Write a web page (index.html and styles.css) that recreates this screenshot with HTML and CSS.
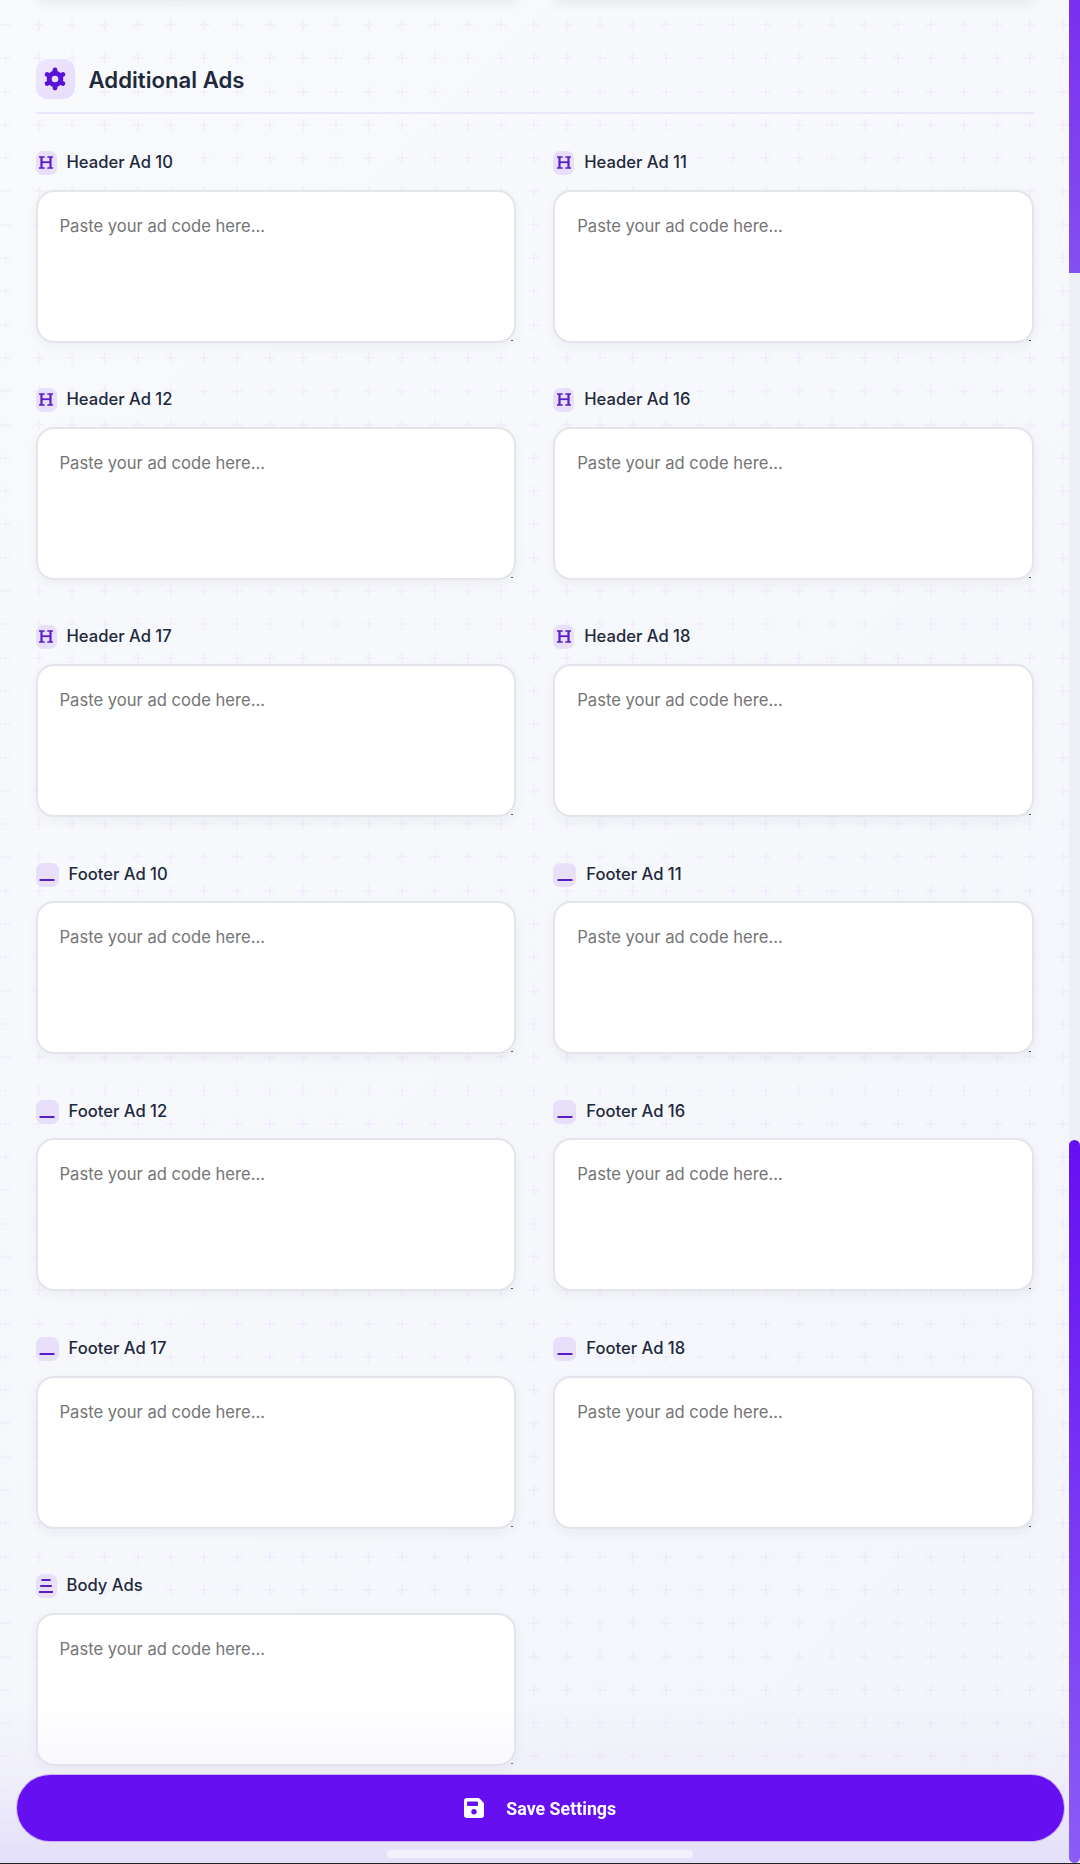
FILE: index.html
```html
<!DOCTYPE html>
<html lang="en">
<head>
  <meta charset="UTF-8">
  <meta name="viewport" content="width=device-width, initial-scale=1.0">
  <title>Additional Ads</title>
  <link rel="stylesheet" href="styles.css">
</head>
<body>
  <svg class="sprites" aria-hidden="true">
    <symbol id="icon-heading" viewBox="0 0 14 13">
      <path d="M0 1h5M9 1h5M0 12h5M9 12h5" stroke="currentColor" stroke-width="1.7" stroke-linecap="round" fill="none"/>
      <path d="M2.5 1v11M11.5 1v11" stroke="currentColor" stroke-width="2.2" fill="none"/>
      <path d="M2.5 6.2h9" stroke="currentColor" stroke-width="1.8" fill="none"/>
    </symbol>
    <symbol id="icon-footer" viewBox="0 0 16 4">
      <rect x="0.5" y="1" width="15" height="2" rx="0.6" fill="currentColor"/>
    </symbol>
    <symbol id="icon-body" viewBox="0 0 14 14">
      <path d="M2.4 1h9.2M1.2 7h11.600M0 13h14" stroke="currentColor" stroke-width="2" fill="none"/>
    </symbol>
  </svg>

  <div class="page">
    <div class="cut-row">
      <div class="cut-card"></div>
      <div class="cut-card"></div>
    </div>

    <div class="section-head">
      <span class="section-icon">
        <svg width="22" height="24" viewBox="0 0 22 24" fill="none" stroke="currentColor">
          <circle cx="11" cy="12" r="5.8" stroke-width="5"/>
          <path d="M11 3v1.500M11 19.500V21M3.200 7.500l1.300.750M17.500 15.750l1.300.750M3.200 16.500l1.300-.750M17.500 8.250l1.300-.750" stroke-width="4.800" stroke-linecap="round"/>
        </svg>
      </span>
      <h2 class="section-title">Additional Ads</h2>
    </div>

    <div class="ad-grid">
      <div class="ad-field">
        <label class="ad-label"><span class="label-icon"><svg class="ic-h"><use href="#icon-heading"/></svg></span>Header Ad 10</label>
        <textarea class="ad-input" placeholder="Paste your ad code here..."></textarea>
      </div>
      <div class="ad-field">
        <label class="ad-label"><span class="label-icon"><svg class="ic-h"><use href="#icon-heading"/></svg></span>Header Ad 11</label>
        <textarea class="ad-input" placeholder="Paste your ad code here..."></textarea>
      </div>
      <div class="ad-field">
        <label class="ad-label"><span class="label-icon"><svg class="ic-h"><use href="#icon-heading"/></svg></span>Header Ad 12</label>
        <textarea class="ad-input" placeholder="Paste your ad code here..."></textarea>
      </div>
      <div class="ad-field">
        <label class="ad-label"><span class="label-icon"><svg class="ic-h"><use href="#icon-heading"/></svg></span>Header Ad 16</label>
        <textarea class="ad-input" placeholder="Paste your ad code here..."></textarea>
      </div>
      <div class="ad-field">
        <label class="ad-label"><span class="label-icon"><svg class="ic-h"><use href="#icon-heading"/></svg></span>Header Ad 17</label>
        <textarea class="ad-input" placeholder="Paste your ad code here..."></textarea>
      </div>
      <div class="ad-field">
        <label class="ad-label"><span class="label-icon"><svg class="ic-h"><use href="#icon-heading"/></svg></span>Header Ad 18</label>
        <textarea class="ad-input" placeholder="Paste your ad code here..."></textarea>
      </div>
      <div class="ad-field">
        <label class="ad-label"><span class="label-icon wide"><svg class="ic-f"><use href="#icon-footer"/></svg></span>Footer Ad 10</label>
        <textarea class="ad-input" placeholder="Paste your ad code here..."></textarea>
      </div>
      <div class="ad-field">
        <label class="ad-label"><span class="label-icon wide"><svg class="ic-f"><use href="#icon-footer"/></svg></span>Footer Ad 11</label>
        <textarea class="ad-input" placeholder="Paste your ad code here..."></textarea>
      </div>
      <div class="ad-field">
        <label class="ad-label"><span class="label-icon wide"><svg class="ic-f"><use href="#icon-footer"/></svg></span>Footer Ad 12</label>
        <textarea class="ad-input" placeholder="Paste your ad code here..."></textarea>
      </div>
      <div class="ad-field">
        <label class="ad-label"><span class="label-icon wide"><svg class="ic-f"><use href="#icon-footer"/></svg></span>Footer Ad 16</label>
        <textarea class="ad-input" placeholder="Paste your ad code here..."></textarea>
      </div>
      <div class="ad-field">
        <label class="ad-label"><span class="label-icon wide"><svg class="ic-f"><use href="#icon-footer"/></svg></span>Footer Ad 17</label>
        <textarea class="ad-input" placeholder="Paste your ad code here..."></textarea>
      </div>
      <div class="ad-field">
        <label class="ad-label"><span class="label-icon wide"><svg class="ic-f"><use href="#icon-footer"/></svg></span>Footer Ad 18</label>
        <textarea class="ad-input" placeholder="Paste your ad code here..."></textarea>
      </div>
      <div class="ad-field">
        <label class="ad-label"><span class="label-icon"><svg class="ic-b"><use href="#icon-body"/></svg></span>Body Ads</label>
        <textarea class="ad-input" placeholder="Paste your ad code here..."></textarea>
      </div>
    </div>
  </div>

  <div class="bottom-fade"></div>
  <button class="save-button" type="button">
    <svg width="20" height="20" viewBox="0 0 20 20">
      <path fill-rule="evenodd" fill="currentColor" d="M3 0h11.200a2 2 0 0 1 1.400.6l3.800 3.800a2 2 0 0 1 .6 1.400V17a3 3 0 0 1-3 3H3a3 3 0 0 1-3-3V3a3 3 0 0 1 3-3zM4 3.500a1 1 0 0 0-1 1v2.500a1 1 0 0 0 1 1h9a1 1 0 0 0 1-1V4.500a1 1 0 0 0-1-1zM10 11a2.700 2.700 0 1 0 0 5.400a2.700 2.700 0 0 0 0-5.400z"/>
    </svg>
    <span>Save Settings</span>
  </button>
  <div class="home-bar"></div>

  <div class="scroll-track">
    <div class="thumb-top"></div>
    <div class="thumb-bottom"></div>
  </div>
  <div class="screen-edge"></div>
</body>
</html>
```

FILE: styles.css
```css
html, body {
  margin: 0;
  padding: 0;
  height: 1864px;
  overflow: hidden;
}
body {
  font-family: "Inter", "Liberation Sans", sans-serif;
  color: #1e293b;
  background-color: #f5f7fc;
  background-image:
    url("data:image/svg+xml,%3Csvg xmlns='http://www.w3.org/2000/svg' width='33' height='33'%3E%3Cpath d='M11 16.500h11M16.500 11v11' stroke='%236610f2' stroke-opacity='.045' stroke-width='1.500'/%3E%3C/svg%3E"),
    linear-gradient(135deg, #f8fafc 0%, #f3f5fb 100%);
  background-size: 33.06px 33.3px, 100% 100%;
  background-position: -11px 8.350px, 0 0;
}
.sprites {
  position: absolute;
  width: 0;
  height: 0;
}
.page {
  padding: 0 46px 0 35.500px;
}
.cut-row {
  display: grid;
  grid-template-columns: 1fr 1fr;
  gap: 37px;
  margin-top: -20px;
}
.cut-card {
  height: 20px;
  background: #fff;
  box-shadow: 0 4px 12px rgba(30, 41, 59, 0.07);
}
.section-head {
  display: flex;
  align-items: center;
  gap: 14px;
  margin-top: 59px;
  padding-bottom: 13px;
  border-bottom: 2px solid #e9e5fa;
}
.section-icon {
  width: 39px;
  height: 40px;
  border-radius: 12px;
  background: linear-gradient(135deg, #eee7fd, #e6ddfb);
  color: #5a12d8;
  display: flex;
  align-items: center;
  justify-content: center;
}
.section-title {
  margin: 0;
  font-size: 22.200px;
  font-weight: 600;
  color: #1e293b;
}
.ad-grid {
  display: grid;
  grid-template-columns: 1fr 1fr;
  column-gap: 37px;
  row-gap: 45.600px;
  margin-top: 37px;
}
.ad-field {
  display: flex;
  flex-direction: column;
  min-width: 0;
}
.ad-label {
  display: flex;
  align-items: flex-start;
  gap: 10px;
  height: 24px;
  margin-bottom: 14.600px;
  font-size: 16.600px;
  line-height: 22px;
  font-weight: 500;
  color: #1e293b;
}
.label-icon {
  width: 21px;
  height: 24px;
  border-radius: 7px;
  background: #e8e0fb;
  color: #5a1ec8;
  display: flex;
  align-items: center;
  justify-content: center;
}
.label-icon.wide {
  width: 23px;
}
.ic-h {
  width: 14px;
  height: 13px;
  margin-top: -1px;
}
.ic-f {
  width: 16px;
  height: 4px;
  margin-top: 11px;
}
.ic-b {
  width: 14px;
  height: 14px;
}
.ad-input {
  display: block;
  box-sizing: border-box;
  width: 100%;
  height: 153px;
  padding: 22px 22px;
  border: 2px solid #e4e5eb;
  border-radius: 18px;
  background: #fff;
  box-shadow: 0 4px 12px rgba(30, 41, 59, 0.05);
  font-family: inherit;
  font-size: 16.600px;
  line-height: 24px;
  color: #1e293b;
  outline: none;
  resize: vertical;
}
.ad-input::placeholder {
  color: #757575;
}
.ad-input::-webkit-resizer {
  background: linear-gradient(#555, #555) no-repeat right 1px bottom 0 / 2px 1px;
}
.bottom-fade {
  position: fixed;
  left: 0;
  right: 0;
  bottom: 0;
  height: 164px;
  background: linear-gradient(to bottom, rgba(228, 222, 249, 0), rgba(228, 222, 249, 0.25) 45%, #e4def9 100%);
  pointer-events: none;
}
.save-button {
  position: fixed;
  left: 16.500px;
  right: 16px;
  bottom: 23px;
  height: 66px;
  display: flex;
  align-items: center;
  justify-content: center;
  gap: 22px;
  border: none;
  border-radius: 34px;
  background-color: #6610f2;
  box-shadow: 0 0 0 1px rgba(167, 120, 245, 0.5);
  color: #fff;
  font-family: "Roboto", "Liberation Sans", sans-serif;
  font-size: 17.800px;
  font-weight: 700;
  cursor: pointer;
}
.home-bar {
  position: fixed;
  left: 387px;
  bottom: 6px;
  width: 306px;
  height: 8px;
  border-radius: 4px;
  background: #f3f1fc;
}
.scroll-track {
  position: fixed;
  top: 0;
  right: 0;
  bottom: 0;
  width: 11px;
  background: #eef0f5;
}
.thumb-top {
  position: absolute;
  top: 0;
  left: 0;
  right: 0;
  height: 273px;
  background: linear-gradient(to bottom, #7a2ff0, #8450ef);
}
.thumb-bottom {
  position: absolute;
  top: 1140px;
  left: 0;
  right: 0;
  bottom: 1px;
  border-radius: 6px;
  background: linear-gradient(to bottom, #6610f2, #8b5cf6);
}
.screen-edge {
  position: fixed;
  left: 0;
  right: 0;
  bottom: 0;
  height: 1px;
  background: #222;
}
```
